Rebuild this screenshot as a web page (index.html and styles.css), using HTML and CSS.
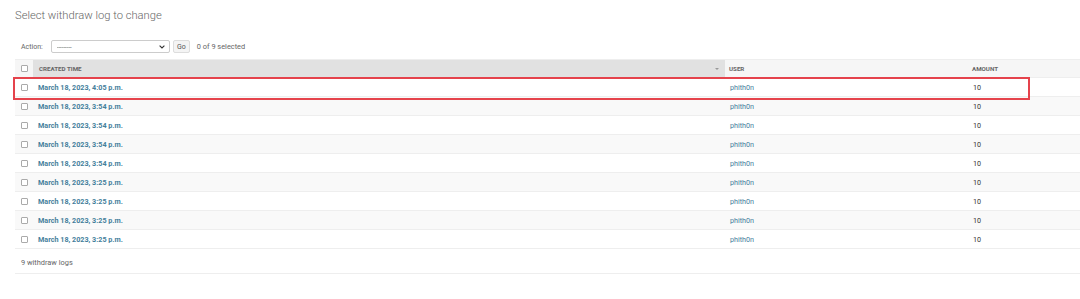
FILE: index.html
```html
<!DOCTYPE html>
<html lang="en">

<head>
    <meta charset="UTF-8">
    <title>Select withdraw log to change</title>
    <link rel="stylesheet" href="styles.css">
</head>

<body>
    <h1>Select withdraw log to change</h1>

    <!-- Barra de ações -->
    <div class="actions">
        <label>Action:</label>
        <span class="select-wrap">
            <select>
                <option>---------</option>
            </select>
            <svg class="chevron" width="6" height="4" viewBox="0 0 6 4"><path d="M0.6 0.6 L3 3 L5.4 0.6" fill="none" stroke="#333" stroke-width="1.1"/></svg>
        </span>
        <button class="go">Go</button>
        <span class="counter">0 of 9 selected</span>
    </div>

    <table>
        <thead>
            <tr>
                <th class="check"><input type="checkbox"></th>
                <th class="sorted">Created time <span class="sort-arrow"></span></th>
                <th class="col-user">User</th>
                <th class="col-amount">Amount</th>
            </tr>
        </thead>
        <tbody id="rows"></tbody>
    </table>

    <p class="paginator">9 withdraw logs</p>

    <div class="highlight"></div>

    <script>
        const logs = [
            "4:05", "3:54", "3:54", "3:54", "3:54", "3:25", "3:25", "3:25", "3:25"
        ];
        const tbody = document.getElementById("rows");
        logs.forEach(hora => {
            tbody.innerHTML += `
                <tr>
                    <td class="check"><input type="checkbox"></td>
                    <th><a href="#">March 18, 2023, ${hora} p.m.</a></th>
                    <td><a href="#" class="user">phith0n</a></td>
                    <td>10</td>
                </tr>
            `;
        });
    </script>
</body>

</html>
```

FILE: styles.css
```css
body {
    font-family: Roboto, "Liberation Sans", sans-serif;
    margin: 0;
    padding: 0 0 0 15px;
    color: #333;
    background: #fff;
    position: relative;
}

h1 {
    font-size: 11.2px;
    font-weight: 300;
    color: #666;
    margin: 0;
    padding-top: 9px;
    height: 31px;
}

.actions {
    display: flex;
    align-items: center;
    height: 13px;
    padding-left: 6px;
    margin-top: 0;
    font-size: 7px;
    color: #666;
}

.actions label {
    margin-right: 8px;
}

.select-wrap {
    position: relative;
    display: inline-block;
}

.select-wrap select {
    appearance: none;
    width: 119px;
    height: 13px;
    border: 1px solid #ccc;
    border-radius: 2px;
    background: #fff;
    font-size: 6px;
    font-family: inherit;
    color: #333;
    padding: 0 5px;
    display: block;
}

.chevron {
    position: absolute;
    right: 5px;
    top: 5px;
}

.go {
    margin-left: 3px;
    height: 13px;
    width: 17px;
    padding: 0;
    border: 1px solid #ddd;
    border-radius: 2px;
    background: #f4f4f4;
    font-size: 7px;
    font-family: inherit;
    color: #555;
}

.counter {
    margin-left: 7px;
    font-size: 7.4px;
}

table {
    width: 1065px;
    border-collapse: collapse;
    margin-top: 6px;
    font-size: 7.2px;
    table-layout: fixed;
}

th, td {
    box-sizing: border-box;
}

thead th {
    background: #f6f6f6;
    border-top: 1px solid #eee;
    border-bottom: 1px solid #eee;
    height: 18px;
    padding: 0 4px;
    text-align: left;
    text-transform: uppercase;
    font-size: 6.2px;
    font-weight: 700;
    color: #666;
}

thead th.sorted {
    background: #e1e1e1;
    position: relative;
    padding-left: 6px;
}

.sort-arrow {
    position: absolute;
    right: 6px;
    top: 8px;
    border-left: 2.5px solid transparent;
    border-right: 2.5px solid transparent;
    border-top: 2.5px solid #999;
}

th.check, td.check {
    width: 18px;
    padding: 0 0 0 6px;
}

.col-user {
    width: 243px;
}

.col-amount {
    width: 112px;
}

tbody th, tbody td {
    height: 19px;
    padding: 0 4px 0 5px;
    border-bottom: 1px solid #eee;
    text-align: left;
    font-weight: 400;
    color: #333;
}

tbody tr:nth-child(even) {
    background: #f9f9f9;
}

tbody th a {
    font-weight: 700;
    color: #447e9b;
    text-decoration: none;
}

a.user {
    color: #447e9b;
    text-decoration: none;
}

input[type="checkbox"] {
    appearance: none;
    width: 7px;
    height: 7px;
    margin: 0;
    border: 1px solid #aaa;
    border-radius: 1px;
    background: #fff;
    display: block;
}

.paginator {
    margin: 0;
    width: 1065px;
    height: 25px;
    line-height: 27px;
    padding-left: 6px;
    box-sizing: border-box;
    font-size: 7.4px;
    color: #666;
    border-bottom: 1px solid #eee;
}

/* caixa vermelha de destaque sobre a primeira linha */
.highlight {
    position: absolute;
    left: 13px;
    top: 77px;
    width: 1013px;
    height: 19px;
    border: 2px solid #e5434c;
    pointer-events: none;
}
```
